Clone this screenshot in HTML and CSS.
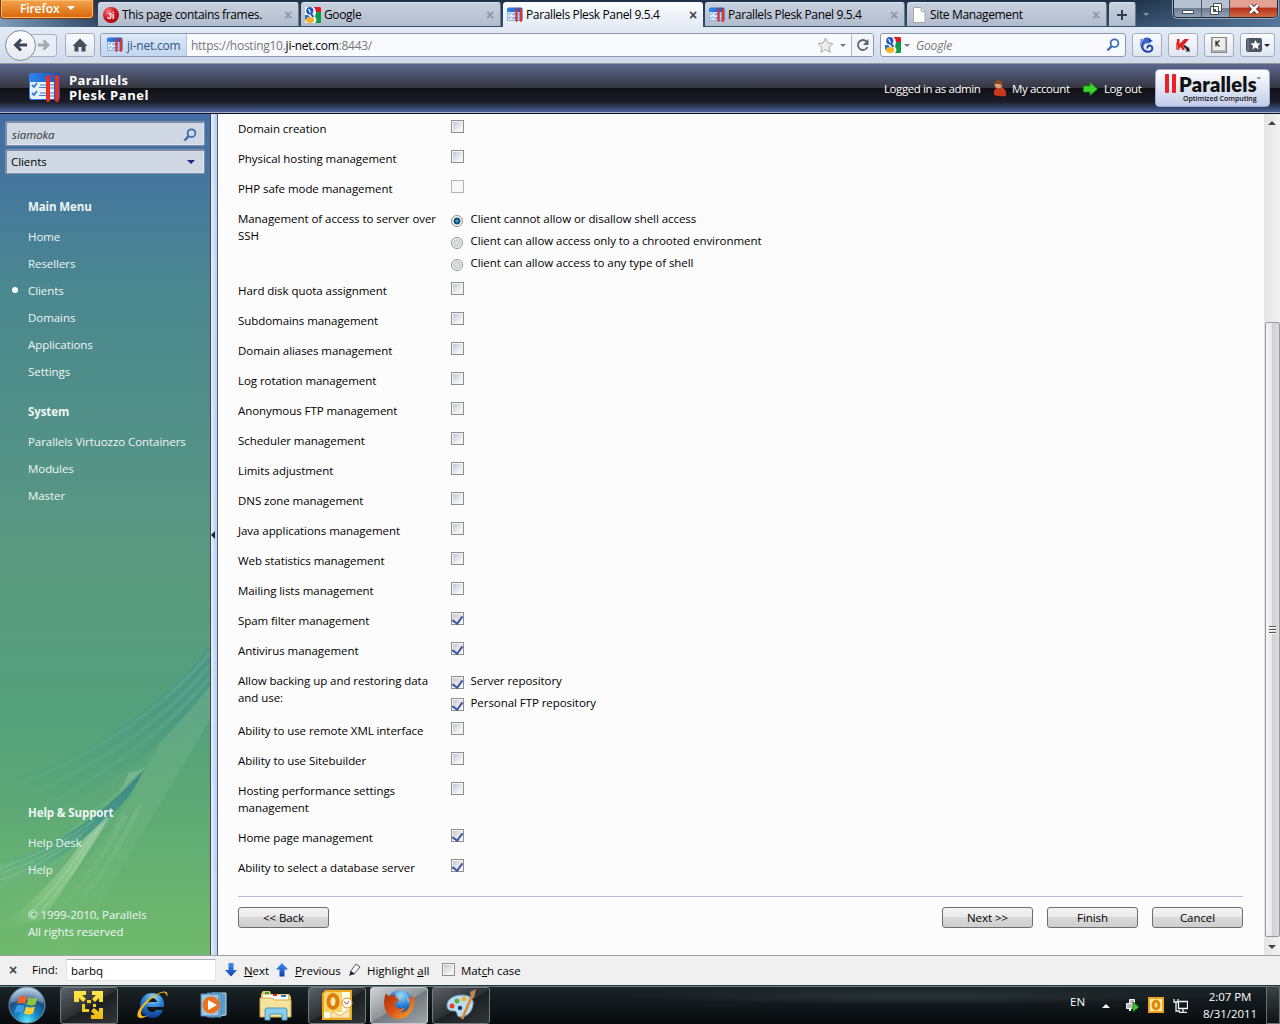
FILE: index.html
```html
<!DOCTYPE html>
<html lang="en">
<head>
<meta charset="utf-8">
<title>Parallels Plesk Panel 9.5.4</title>
<link rel="stylesheet" href="styles.css">
</head>
<body>
<svg class="defs" width="0" height="0">
  <defs>
    <linearGradient id="gBlue" x1="0" y1="0" x2="1" y2="0"><stop offset="0" stop-color="#2f86ee"/><stop offset="1" stop-color="#1554b8"/></linearGradient>
    <linearGradient id="gArrow" x1="0" y1="0" x2="0" y2="1"><stop offset="0" stop-color="#3f8ef0"/><stop offset="1" stop-color="#123fae"/></linearGradient>
    <radialGradient id="gOrb" cx=".5" cy=".95" r=".9"><stop offset="0" stop-color="#5fe9ff"/><stop offset=".35" stop-color="#1587c4"/><stop offset=".7" stop-color="#1d4e80"/><stop offset="1" stop-color="#9fc4dc"/></radialGradient>
    <radialGradient id="gRed" cx=".35" cy=".3" r=".8"><stop offset="0" stop-color="#f88"/><stop offset=".5" stop-color="#d01820"/><stop offset="1" stop-color="#a00810"/></radialGradient>
    <radialGradient id="gGlobe" cx=".55" cy=".2" r=".8"><stop offset="0" stop-color="#9adcf8"/><stop offset=".5" stop-color="#2a7fd0"/><stop offset="1" stop-color="#0c3a90"/></radialGradient>
    <linearGradient id="gFox" x1="0" y1="0" x2="1" y2="1"><stop offset="0" stop-color="#a82c0c"/><stop offset=".5" stop-color="#dc5418"/><stop offset="1" stop-color="#f8b030"/></linearGradient>
    <linearGradient id="gGold" x1="0" y1="0" x2="0" y2="1"><stop offset="0" stop-color="#ffe94a"/><stop offset="1" stop-color="#f0b80c"/></linearGradient>
    <linearGradient id="gBand" x1="1" y1="0" x2="0" y2="1"><stop offset="0" stop-color="#2f8a90" stop-opacity=".3"/><stop offset="1" stop-color="#2f8a90" stop-opacity="0"/></linearGradient>
    <linearGradient id="gPale" x1="1" y1="0" x2="0" y2="1"><stop offset="0" stop-color="#fff" stop-opacity=".08"/><stop offset="1" stop-color="#fff" stop-opacity="0"/></linearGradient>
    <linearGradient id="gLeaf" x1="1" y1="0" x2="0" y2="1"><stop offset="0" stop-color="#2f8088" stop-opacity=".85"/><stop offset=".5" stop-color="#3a9088" stop-opacity=".6"/><stop offset="1" stop-color="#7cc090" stop-opacity=".3"/></linearGradient>
    <linearGradient id="gRay" x1="1" y1="0" x2="0" y2="1"><stop offset="0" stop-color="#d8f0dc" stop-opacity=".4"/><stop offset=".6" stop-color="#c8ecb8" stop-opacity=".25"/><stop offset="1" stop-color="#c8ecb8" stop-opacity="0"/></linearGradient>
  </defs>
  <symbol id="plesk" viewBox="0 0 32 30">
    <rect x="0" y="0" width="31" height="27" rx="3" fill="url(#gBlue)"/>
    <path d="M1 9h16v17H3q-2 0-2-2z" fill="#e8f1fb"/><path d="M21 9h4v17h-4z" fill="#e8f1fb"/>
    <path d="M3 12l2 2 3-4M3 20l2 2 3-4" fill="none" stroke="#2a7be0" stroke-width="1.8"/>
    <path d="M11 12h7M10 14.500h8M11 20h7M10 22.500h8M21 12h4M21 15h4M21 20h4M21 23h4" stroke="#3a7fd8" stroke-width="1.200"/>
    <path d="M19 4v23M28 4v23" stroke="#ee2d24" stroke-width="4" stroke-linecap="round"/>
    <path d="M22 2l3 3V2z" fill="#ee2d24"/>
  </symbol>
  <symbol id="google" viewBox="0 0 16 16">
    <rect width="16" height="16" rx="1" fill="#fff"/>
    <path d="M8.500 0H15q1 0 1 1v4H11q0-3-2.500-5z" fill="#e01a22"/><path d="M11 5h5v10q0 1-1 1h-5q3-3 0-6z" fill="#0c9b48"/>
    <path d="M0 8h3l2 2-5 3z" fill="#2a6fd0"/>
    <ellipse cx="4.800" cy="3.800" rx="3.600" ry="3.800" fill="#2257c5"/><path d="M3.500 2l2 3.500" stroke="#fff" stroke-width="1.300"/>
    <path d="M6 7l2.500 3" stroke="#2257c5" stroke-width="2"/>
    <ellipse cx="5" cy="13" rx="4.200" ry="3" fill="#f7b321"/>
  </symbol>
  <symbol id="mag" viewBox="0 0 14 14">
    <circle cx="8.500" cy="5.200" r="3.900" fill="none" stroke="#3d6fae" stroke-width="1.800"/><path d="M5.600 8.200L1.500 12.500" stroke="#3d6fae" stroke-width="2.400"/>
  </symbol>
</svg>

<div class="tabstrip">
  <div class="fx-button">Firefox <i class="caret-w"></i></div>
  <div class="tabs">
    <div class="tab"><svg width="16" height="16" viewBox="0 0 16 16"><circle cx="8" cy="8" r="8" fill="url(#gRed)"/><text x="4" y="12" class="ji">Ji</text></svg><span class="tab-t t1">This page contains frames.</span><b class="x">×</b></div>
    <div class="tab"><svg width="16" height="16"><use href="#google"/></svg><span class="tab-t">Google</span><b class="x">×</b></div>
    <div class="tab active"><svg width="16" height="16"><use href="#plesk"/></svg><span class="tab-t">Parallels Plesk Panel 9.5.4</span><b class="x">×</b></div>
    <div class="tab"><svg width="16" height="16"><use href="#plesk"/></svg><span class="tab-t">Parallels Plesk Panel 9.5.4</span><b class="x">×</b></div>
    <div class="tab"><svg width="16" height="16" viewBox="0 0 16 16"><path d="M2.500.5h7.500l4 4v11h-11.500z" fill="#fff" stroke="#a8a8a8"/><path d="M10 .5v4h4" fill="#e4e4e4" stroke="#b0b0b0"/></svg><span class="tab-t">Site Management</span><b class="x">×</b></div>
    <div class="tab newtab"><svg width="12" height="12"><path d="M6 1v10M1 6h10" stroke="#333c4a" stroke-width="2"/></svg></div>
  </div>
  <i class="tablist"></i>
  <div class="winctl">
    <span><svg width="14" height="14"><rect x="1.500" y="8.500" width="11" height="3" fill="#fff" stroke="#46505e"/></svg></span>
    <span><svg width="14" height="14"><path d="M4.500 1.500h8v8h-8zM1.500 4.500h8v8h-8z" fill="#fff" stroke="#46505e"/><rect x="4" y="7" width="3" height="3" fill="#46505e"/></svg></span>
    <span class="close"><svg width="14" height="14"><path d="M3 3l8 8M11 3l-8 8" stroke="#5a2020" stroke-width="4.500"/><path d="M3 3l8 8M11 3l-8 8" stroke="#fff" stroke-width="2.600"/></svg></span>
  </div>
</div>

<div class="navbar">
  <div class="backfwd">
    <span class="back"><svg width="18" height="18"><path d="M15 9H4M9 3.500L3.500 9 9 14.500" fill="none" stroke="#3c4656" stroke-width="3"/></svg></span>
    <span class="fwd"><svg width="14" height="14"><path d="M1 7h9M6.500 2.500L11 7l-4.500 4.500" fill="none" stroke="#a3abb6" stroke-width="2.800"/></svg></span>
  </div>
  <span class="btn home"><svg width="16" height="14"><path d="M8 .5L.5 8h2v5.500H6.500V9h3v4.500h4V8h2z" fill="#454f5e"/></svg></span>
  <div class="urlbar">
    <span class="ident"><svg width="16" height="16"><use href="#plesk"/></svg><span>ji-net.com</span></span>
    <span class="url">https://hosting10.<b>ji-net.com</b>:8443/</span>
    <svg class="star" width="17" height="16"><path d="M8.500 1l2.200 5 5.300.5-4 3.500 1.200 5.300-4.700-2.800-4.700 2.800L5 10 1 6.500 6.300 6z" fill="#eee" stroke="#a8a8a8"/></svg>
    <i class="caret"></i>
    <span class="reload"><svg width="14" height="14"><path d="M11.500 9A5 5 0 1 1 10.500 3.500" fill="none" stroke="#5c6470" stroke-width="1.800"/><path d="M12.500 1v6H7z" fill="#5c6470"/></svg></span>
  </div>
  <div class="search">
    <svg width="16" height="16"><use href="#google"/></svg><i class="caret"></i><em>Google</em><svg class="mag" width="14" height="14"><use href="#mag"/></svg>
  </div>
  <span class="btn ext"><svg width="16" height="16" viewBox="0 0 16 16"><path d="M2 2q1 4 4 5M3 11q-2-3-1-6" fill="none" stroke="#5578d8" stroke-width="1.600"/><path d="M11 5q-5-2-7 2-2 5 2 7 5 2 7-1 1-4-2-4.500-3 0-2.500 3" fill="none" stroke="#2745b0" stroke-width="2"/><ellipse cx="8" cy="3.500" rx="4" ry="3" fill="#3c62d0"/><path d="M10 2l4 2-4 1z" fill="#1c3490"/></svg></span>
  <span class="btn ext"><svg width="16" height="16" viewBox="0 0 16 16"><path d="M2 2h2.500v5l5-5H14L8 9l2 4H7.500L5.500 10 4.500 11v2H2z" fill="#e01c1c"/><path d="M1 4v9h3z" fill="#e86060"/><path d="M8 9l2-1 3.500 3V9l1.500 5.500h-5l2-1.200z" fill="#222"/></svg></span>
  <span class="btn ext"><svg width="16" height="16" viewBox="0 0 16 16"><rect x=".5" y=".5" width="15" height="15" fill="#b2b2b2" stroke="#888"/><rect x="2" y="1" width="12" height="12" fill="#efefea"/><path d="M5 3.500v6M8.500 3.500L5.500 6.500l3 3" fill="none" stroke="#222" stroke-width="1.200"/></svg></span>
  <span class="btn ext wide"><svg width="16" height="14" viewBox="0 0 16 14"><rect width="16" height="14" rx="2" fill="#4a5462"/><path d="M2 1v12" stroke="#8590a0"/><path d="M9.500 2l1.500 3.300 3.500.3-2.600 2.300.8 3.500-3.200-1.800-3.200 1.800.8-3.500L4.500 5.600 8 5.300z" fill="#fff"/></svg><i class="caret dark"></i></span>
</div>

<div class="header">
  <svg class="hlogo" width="32" height="30"><use href="#plesk"/></svg>
  <div class="brand"><span>Parallels</span><span>Plesk Panel</span></div>
  <div class="acct">
    <span class="a1">Logged in as admin</span>
    <svg width="14" height="17" viewBox="0 0 14 17"><path d="M1 15q-1-7 4-7l4-1q5 3 4 9-7 1-12-1z" fill="#c8371a"/><circle cx="5.500" cy="4.500" r="3.800" fill="#e0a070"/><path d="M1.500 4Q2 0 6 .3 10 1 9 6L7 4z" fill="#8a4a1c"/></svg>
    <span class="a2">My account</span>
    <svg width="15" height="14" viewBox="0 0 15 14"><path d="M.5 4H7V.5L14.500 7 7 13.500V10H.5z" fill="#3ad42c" stroke="#1e8c18" stroke-width=".8"/></svg>
    <span class="a3">Log out</span>
  </div>
  <div class="plogo"><div class="pl-top"><i></i><i></i><span>Parallels</span><small>™</small></div><div class="pl-sub">Optimized Computing</div></div>
</div>

<div class="main">
  <aside class="side">
    <svg class="swoosh" width="210" height="320" viewBox="0 0 210 320">
      <path d="M210 12Q130 110 0 147V200Q140 150 210 50z" fill="url(#gBand)"/>
      <path d="M210 18Q130 112 0 155M210 30Q130 125 0 170M210 42Q130 138 0 190" fill="none" stroke="url(#gPale)" stroke-width="4"/>
      <path d="M210 52V85Q150 185 70 320H0Q90 240 146 133L160 108z" fill="url(#gPale)"/>
      <path d="M145 132l-7 4-9 1q-4 12-12 20L0 250V320Q80 240 145 132z" fill="url(#gPale)"/>
      <path d="M145 132l-7 4-9 1q-3 12-11 21z" fill="#fff" opacity=".12"/>
      <path d="M143 136Q125 155 105 172 60 210 0 229V252Q50 235 85 202 125 175 143 136z" fill="url(#gLeaf)"/>
      <path d="M0 233Q55 215 95 185M0 239Q50 222 88 194M0 245Q45 230 82 200" fill="none" stroke="#b6e4c0" opacity=".3"/>
      <path d="M108 180L85 203Q50 255 0 292L42 285Q75 240 108 184z" fill="url(#gRay)"/>
      <path d="M100 190Q75 240 38 280M92 200Q65 245 28 280" fill="none" stroke="#d8f4d0" stroke-width="1.500" opacity=".2"/>
      <path d="M140 170Q110 235 60 290M125 180Q95 240 45 290" fill="none" stroke="url(#gPale)" stroke-width="5"/>
    </svg>
    <div class="field f1"><em>siamoka</em><svg width="14" height="14"><use href="#mag"/></svg></div>
    <div class="field f2"><span>Clients</span><i></i></div>
    <nav class="menu">
      <h4>Main Menu</h4><a>Home</a><a>Resellers</a><a class="cur">Clients</a><a>Domains</a><a>Applications</a><a>Settings</a>
      <h4 class="sys">System</h4><a class="pvc">Parallels Virtuozzo Containers</a><a>Modules</a><a>Master</a>
    </nav>
    <nav class="menu foot">
      <h4>Help &amp; Support</h4><a>Help Desk</a><a>Help</a>
      <p>© 1999-2010, Parallels<br>All rights reserved</p>
    </nav>
  </aside>
  <div class="split"><i></i></div>
  <section class="form">
    <div class="row"><label>Domain creation</label><i class="cb"></i></div>
    <div class="row"><label>Physical hosting management</label><i class="cb"></i></div>
    <div class="row"><label>PHP safe mode management</label><i class="cb off"></i></div>
    <div class="row"><label>Management of access to server over<br>SSH</label>
      <div class="opts"><span><i class="rb on"></i>Client cannot allow or disallow shell access</span><span><i class="rb"></i>Client can allow access only to a chrooted environment</span><span><i class="rb"></i>Client can allow access to any type of shell</span></div></div>
    <div class="row"><label>Hard disk quota assignment</label><i class="cb"></i></div>
    <div class="row"><label>Subdomains management</label><i class="cb"></i></div>
    <div class="row"><label>Domain aliases management</label><i class="cb"></i></div>
    <div class="row"><label>Log rotation management</label><i class="cb"></i></div>
    <div class="row"><label>Anonymous FTP management</label><i class="cb"></i></div>
    <div class="row"><label>Scheduler management</label><i class="cb"></i></div>
    <div class="row"><label>Limits adjustment</label><i class="cb"></i></div>
    <div class="row"><label>DNS zone management</label><i class="cb"></i></div>
    <div class="row"><label>Java applications management</label><i class="cb"></i></div>
    <div class="row"><label>Web statistics management</label><i class="cb"></i></div>
    <div class="row"><label>Mailing lists management</label><i class="cb"></i></div>
    <div class="row"><label>Spam filter management</label><i class="cb on"></i></div>
    <div class="row"><label>Antivirus management</label><i class="cb on"></i></div>
    <div class="row"><label>Allow backing up and restoring data<br>and use:</label>
      <div class="opts"><span><i class="cb on"></i>Server repository</span><span><i class="cb on"></i>Personal FTP repository</span></div></div>
    <div class="row"><label>Ability to use remote XML interface</label><i class="cb"></i></div>
    <div class="row"><label>Ability to use Sitebuilder</label><i class="cb"></i></div>
    <div class="row"><label>Hosting performance settings<br>management</label><i class="cb"></i></div>
    <div class="row"><label>Home page management</label><i class="cb on"></i></div>
    <div class="row"><label>Ability to select a database server</label><i class="cb on"></i></div>
    <div class="actions"><button>&lt;&lt; Back</button><button class="next">Next &gt;&gt;</button><button>Finish</button><button>Cancel</button></div>
  </section>
  <div class="scroll"><i class="up"></i><div class="thumb"><b></b></div><i class="down"></i></div>
</div>

<div class="findbar">
  <b class="fx">×</b><span class="flabel">Find:</span><span class="finput">barbq</span>
  <svg width="12" height="14"><path d="M3.500 0h5v7H12l-6 6.500L0 7h3.500z" fill="url(#gArrow)"/></svg><span class="fnext"><u>N</u>ext</span>
  <svg width="12" height="14"><path d="M3.500 13.500h5v-7H12L6 0 0 6.500h3.500z" fill="url(#gArrow)"/></svg><span class="fprev"><u>P</u>revious</span>
  <svg width="13" height="14" viewBox="0 0 13 14"><path d="M8 1l4 3-6 7-4-2z" fill="#f6f6f6" stroke="#555"/><path d="M3 8l4 3-4 1-2 1z" fill="#222"/></svg><span class="fhigh">Highlight <u>a</u>ll</span>
  <i class="cb"></i><span class="fmatch">Mat<u>c</u>h case</span>
</div>

<div class="taskbar">
  <svg class="orb" width="38" height="38" viewBox="0 0 38 38"><circle cx="19" cy="19" r="18" fill="url(#gOrb)" stroke="#6a8ea8"/><path d="M3 17a16 15 0 0 1 32 0q-15-6-32 0z" fill="#fff" opacity=".25"/>
    <path d="M11 11q4-2 8 0l-2 7q-4-2-8 0z" fill="#f0602a"/><path d="M20.500 11.500q4 2 9 0l-2 7q-4 2-9 0z" fill="#8cc63c"/><path d="M8.500 20q4-2 8 0l-2 7q-4-2-8 0z" fill="#3c9ce8"/><path d="M18 20.500q4 2 9 0l-2 7q-4 2-9 0z" fill="#fccb30"/></svg>
  <div class="task box"><svg width="32" height="32" viewBox="0 0 32 32"><path d="M1 2h12v4H9l4 4-3 3-4-4v4H1zM30 2v11h-4V9l-4 4-3-3 4-4h-4V2zM30 30H18v-4h4l-4-4 3-3 5 4v-4h4z" fill="url(#gGold)"/><path d="M9 15h3v5h4v3H9zM14 11h4v3h-4zM20 15h3v3h-3z" fill="#f6cc1c"/></svg></div>
  <div class="task"><svg width="34" height="32" viewBox="0 0 34 32"><path d="M17 4C9 4 5 10 5 17s5 12 12 12c6 0 9-3 11-8h-7q-2 3-5 2-4-1-4-5h17C30 9 25 4 17 4zm-5 9q1-4 5-4t5 4z" fill="url(#gGlobe)"/><path d="M32 8C34 2 30 0 20 6 8 12 0 24 3 28q3 3 11-2-7 3-8-1C5 20 14 11 22 6q9-6 10 2z" fill="#f4b41c"/></svg></div>
  <div class="task"><svg width="28" height="28" viewBox="0 0 28 28"><path d="M12 2h14v22l-14 2z" fill="#5e9cc8" stroke="#b4dcf4"/><path d="M7 2h14v24H7z" fill="#8cc0e0" stroke="#4880a8"/><path d="M1 3h18v22H1z" fill="#9ac8e4" stroke="#4880a8"/><circle cx="11" cy="14" r="8.500" fill="#f0701a"/><path d="M8 9l9 5-9 5z" fill="#fff"/></svg></div>
  <div class="task"><svg width="34" height="32" viewBox="0 0 34 32"><path d="M2 5l2-3h7l1 3h18l2 3v20H2z" fill="#e4c468"/><path d="M4 6h25v6H4z" fill="#fff"/><path d="M6 3h4v2H6z" fill="#28a838"/><path d="M14 5h4v2h-4z" fill="#d83020"/><path d="M22 6h5v2h-5z" fill="#2878d0"/><path d="M1 9h12l2 2h17v17H1z" fill="#f6e49c" stroke="#d0a840"/><path d="M6 31V21q0-2 2-2h18q2 0 2 2v10h-5v-6H11v6z" fill="#8accec" stroke="#4c98c4"/></svg></div>
  <div class="task box"><svg width="32" height="32" viewBox="0 0 32 32"><path d="M5 2h25v28H2V5z" fill="#fffbe8" stroke="#f0a818" stroke-width="2"/><path d="M10 22l9 5 10-7v9H10z" fill="#fbeab8" stroke="#e0b050"/><path d="M6 3h15v20H3V6z" fill="#fbd468"/><ellipse cx="12" cy="12.500" rx="4.500" ry="6.500" fill="#ffe9a8" stroke="#dc7c0c" stroke-width="4"/><circle cx="26" cy="14" r="5" fill="#fff" stroke="#d89028"/><path d="M23 13l3 2 2-3" fill="none" stroke="#d03820"/></svg></div>
  <div class="task box sel"><svg width="34" height="32" viewBox="0 0 34 32"><circle cx="18" cy="14" r="13" fill="url(#gGlobe)"/><path d="M15 4q5 0 5 4t-5 3zM24 6l5 5-3 4z" fill="#8cd0f0" opacity=".6"/><path d="M4 4q1 3 4 3l5-2q-1 3 2 4l2 2q-1 2-4 3 0 5 5 6l5-1q-1 3-5 4 7 1 9-5 2-5-1-10 5 3 4-3 4 6 1 14c-3 8-11 13-19 10C2 26 0 14 4 4z" fill="url(#gFox)"/></svg></div>
  <div class="task box last"><svg width="34" height="32" viewBox="0 0 34 32"><path d="M3 18C2 10 10 6 18 6c9 0 12 5 11 10-1 7-6 12-13 12-4 0-2-5-5-6-3 0-7 0-8-4z" fill="#b8dcf0" stroke="#6898b8"/><circle cx="8" cy="17" r="2.500" fill="#e04030"/><circle cx="13" cy="12" r="2.500" fill="#58b040"/><circle cx="20" cy="10" r="2.500" fill="#f0b030"/><circle cx="16" cy="19" r="2.200" fill="#1c3c60"/><path d="M18 30L28 7" stroke="#e08828" stroke-width="2.600"/><path d="M27 9l-1-6 6-3-2 9z" fill="#b88858"/></svg></div>
  <div class="tray">
    <span class="en">EN</span><i class="tri"></i>
    <svg class="t-a" width="15" height="15"><path d="M4.500 1.500h5v4h-5zM1.500 5.500h6v5h-6z" fill="#bbb" stroke="#f4f4f4"/><path d="M5 10v3" stroke="#fff" stroke-width="2"/><path d="M8 4l6 5-6 5z" fill="#3cc83c" stroke="#0a700a"/></svg>
    <svg class="t-b" width="16" height="16"><rect width="16" height="16" fill="#f4a020"/><path d="M2 2h12v12H2z" fill="#fff0b0"/><ellipse cx="8" cy="8" rx="3" ry="4" fill="#ffe498" stroke="#e08808" stroke-width="3"/></svg>
    <svg class="t-c" width="15" height="15"><path d="M5.500 3.500h9v7h-9zM10 11v3M6 14.500h8M1 1v3h4V1M3 4v9h4" fill="none" stroke="#f4f4f4" stroke-width="1.300"/></svg>
    <div class="clock">2:07 PM<br>8/31/2011</div>
  </div>
  <div class="peek"></div>
</div>
</body>
</html>
```
FILE: styles.css
```css
* { box-sizing: border-box; }
body { margin: 0; width: 1280px; height: 1024px; overflow: hidden; display: flex; flex-direction: column; font: 11.5px/17px "Open Sans", "Noto Sans", sans-serif; letter-spacing: -.06px; color: #000; background: #fcfcfc; white-space: nowrap; }
svg { display: block; flex: none; }
.defs { position: absolute; }
i { flex: none; }

.tabstrip { height: 27px; flex: none; display: flex; align-items: flex-start; background: linear-gradient(90deg, rgba(160,190,215,.7) 0, rgba(30,50,75,.1) 100px, rgba(0,0,0,0) 1130px, rgba(120,160,200,.5) 1280px), linear-gradient(#1e3148, #35506c); }
.fx-button { width: 94px; height: 19px; flex: none; margin-right: 4px; padding-left: 19px; display: flex; align-items: center; gap: 8px; color: #fff; font-weight: 600; font-size: 12px; line-height: 15px; padding-bottom: 2px; letter-spacing: -.1px; background: linear-gradient(#f3a64b, #d9640b); border: 1px solid #7c3a08; border-top: 0; border-radius: 0 0 4px 4px; box-shadow: inset 0 0 0 1px #f8bd73; }
.caret-w { border: 4px solid transparent; border-top-color: #fff; border-bottom: 0; }
.tabs { display: flex; gap: 2px; padding-top: 2px; }
.tab { width: 200px; height: 24px; display: flex; align-items: center; padding: 0 6px 0 4px; border-radius: 3px 3px 0 0; background: linear-gradient(#c8d1de, #b1bccd); border-top: 1px solid #dde4ed; border-right: 1px solid #6c7c90; font-size: 12px; }
.tab:first-child { width: 201px; padding-left: 5px; }
.tab.active { height: 25px; background: linear-gradient(#fbfcfe, #e4ebf5); border: 0; }
.tab-t { margin-left: 3px; flex: 1; letter-spacing: -.36px; }
.tab .t1 { letter-spacing: -.35px; }
.x { font: 700 14px/14px "Liberation Sans", sans-serif; color: #8a94a2; }
.active .x { color: #3c4450; }
.ji { font: 700 9px "Liberation Sans", sans-serif; fill: #fff; }
.newtab { width: 27px; padding: 0; justify-content: center; }
.tablist { margin: 13px 0 0 7px; border: 3px solid transparent; border-top-color: #8292a6; border-bottom: 0; }
.winctl { margin-left: auto; margin-right: 2px; height: 18px; display: flex; border: 1px solid #1c2938; border-top: 0; border-radius: 0 0 5px 5px; overflow: hidden; box-shadow: 0 0 0 1px #9aaabb; }
.winctl span { width: 28px; display: grid; place-items: center; background: linear-gradient(#b6c2cf 45%, #6f8092 50%, #93a3b4); border-right: 1px solid #48586a; }
.winctl .close { width: 47px; border: 0; background: linear-gradient(#e1a294 40%, #b9331d 50%, #cf6a40); }

.navbar { height: 37px; flex: none; display: flex; align-items: center; padding: 0 5px; background: linear-gradient(#e4ebf5, #cfd9ea); border-bottom: 1px solid #969696; }
.backfwd { display: flex; align-items: center; width: 60px; }
.back { width: 31px; height: 31px; border-radius: 50%; border: 1px solid #838b98; display: grid; place-items: center; background: linear-gradient(#fff, #e4e8ef); z-index: 1; }
.fwd { width: 26px; height: 23px; margin-left: -5px; border: 1px solid #aab3c2; border-radius: 0 3px 3px 0; display: grid; place-items: center; background: #e9eef6; }
.btn { height: 24px; display: flex; align-items: center; justify-content: center; border: 1px solid #a4adbc; border-radius: 3px; background: linear-gradient(#fafbfd, #dfe6f0); }
.home { width: 30px; margin-right: 5px; }
.urlbar { width: 774px; height: 24px; display: flex; align-items: center; border: 1px solid #8e98a8; border-radius: 3px; background: #f8fafd; font-size: 12px; overflow: hidden; }
.ident { width: 86px; height: 22px; display: flex; align-items: center; gap: 4px; padding-left: 6px; background: linear-gradient(#dce9f8, #c3d6f0); border-right: 1px solid #b3c8e6; color: #2e5484; letter-spacing: -.2px; }
.url { flex: 1; padding-left: 4px; color: #777; letter-spacing: -.26px; }
.url b { font-weight: 400; color: #000; }
.star { margin-right: 6px; }
.caret { border: 3px solid transparent; border-top-color: #777; border-bottom: 0; }
.caret.dark { border-top-color: #222; margin-left: 2px; }
.reload { width: 22px; height: 22px; margin-left: 5px; border-left: 1px solid #b0b7c2; display: grid; place-items: center; background: #f2f5fa; }
.search { width: 246px; height: 24px; margin-left: 6px; margin-right: 6px; display: flex; align-items: center; padding: 0 5px 0 4px; border: 1px solid #8e98a8; border-radius: 3px; background: #f8fafd; color: #777; font-size: 12px; }
.search .caret { margin: 0 6px 0 3px; }
.search em { flex: 1; letter-spacing: -.15px; }
.ext { width: 30px; margin-right: 6px; }
.ext.wide { width: 35px; margin-right: 0; }

.header { height: 50px; flex: none; display: flex; padding: 0 10px 0 29px; color: #fff; background: linear-gradient(#5c678c, #35363f 24px, #101015 24px, #1b1d29 38px, #455a8f 47px); border-bottom: 1px solid #0d1020; box-shadow: inset 0 -1px #a8b6d4; position: relative; z-index: 1; }
.hlogo { margin-top: 9px; }
.brand { margin: 9px 0 0 8px; display: flex; flex-direction: column; font: 700 13px/15px "Open Sans", sans-serif; letter-spacing: .55px; }
.brand span:first-child { letter-spacing: .4px; }
.acct { margin-left: auto; display: flex; align-items: center; letter-spacing: -.4px; }
.acct svg:nth-child(2) { margin-left: 14px; }
.a1, .a2, .a3 { flex: none; }
.a1 { width: 95px; }
.a2 { width: 57px; margin: 0 14px 0 5px; }
.a3 { width: 38px; margin: 0 13px 0 6px; }
.plogo { width: 115px; height: 38px; margin-top: 5px; border-radius: 4px; background: linear-gradient(#fff, #c2cde9); border: 1px solid #9eaad0; color: #111; }
.pl-top { display: flex; padding: 4px 0 0 9px; height: 24px; }
.pl-top i { width: 4px; height: 19px; margin-right: 3px; border-radius: 1px; background: #e8202a; }
.pl-top span { font: 800 20px/20px Lato, sans-serif; letter-spacing: .2px; }
.pl-top small { font: 5px/10px "Open Sans", sans-serif; }
.pl-sub { padding: 0 0 0 27px; font: 600 7px/9px "Open Sans", sans-serif; letter-spacing: -.02px; }

.main { height: 841px; flex: none; display: flex; }
.side { width: 210px; display: flex; flex-direction: column; padding: 7px 5px 0; background: linear-gradient(#426da6, #4a8790 170px, #5a9a80 450px, #54a07c 600px, #6fb96c 835px); position: relative; color: #eef6f4; }
.swoosh { position: absolute; left: 0; bottom: 0; }
.field { height: 25px; flex: none; display: flex; align-items: center; justify-content: space-between; padding: 2px 7px 0 6px; background: #cfd8e3; border: 1px solid #8490a8; border-radius: 2px; box-shadow: inset 1px 1px #7f8aa0, inset -1px -1px #dde4ee; }
.f1 { color: #333; }
.f2 { margin-top: 3px; padding: 0 9px 0 5px; color: #000; }
.f2 i { border: 4px solid transparent; border-top-color: #20267a; border-bottom: 0; }
.menu { padding: 21px 0 0 23px; display: flex; flex-direction: column; position: relative; }
.menu h4 { margin: 0; height: 30px; font: 700 11.500px/23px "Open Sans", sans-serif; letter-spacing: -.1px; }
.menu a { height: 27px; line-height: 23px; }
.menu .sys { margin-top: 13px; }
.cur::before { content: ""; position: absolute; left: 7px; margin-top: 8px; width: 6px; height: 6px; border-radius: 50%; background: #fff; }
.foot { margin-top: auto; padding: 0 0 15px 23px; }
.foot p { margin: 21px 0 0; }
.split { width: 8px; flex: none; display: flex; align-items: center; background: linear-gradient(90deg, #e8f0fc, #b3cdf5); border-left: 1px solid #41465a; border-right: 1px solid #5a6070; }
.split i { border: 4px solid transparent; border-right-color: #222; border-left: 0; }

.form { width: 1046px; padding: 0 21px 0 20px; background: #fcfcfc; }
.row { display: grid; grid-template-columns: 213px 1fr; align-items: start; }
.row label { padding: 6px 0 7px; }
.cb { width: 13px; height: 13px; border: 1px solid #8e8f8f; background: linear-gradient(135deg, #c4c9d0, #f4f4f4 80%) content-box, #f4f4f4; padding: 1px; display: grid; place-items: center; }
.row > .cb { margin-top: 6px; }
.cb.off { border-color: #b4b4b4; background: #f7f7f7; }
.cb.on::after { content: ""; width: 5px; height: 8px; margin-bottom: 2px; border: solid #3f55a0; border-width: 0 2px 2px 0; transform: rotate(36deg); }
.opts { padding: 3px 0 3px; display: flex; flex-direction: column; }
.opts span { height: 22px; display: flex; align-items: center; gap: 6.500px; }
.opts .cb { margin-top: 5px; }
.rb { width: 12px; height: 12px; margin-top: 6px; margin-right: 1px; border: 1px solid #8e8f8f; border-radius: 50%; background: radial-gradient(circle, #e6e8ea 0, #c9cccf 3.500px, #f4f4f4 4px); }
.rb.on { background: radial-gradient(circle at 50% 50%, #4cc0e8 0, #0c4a78 2.500px, #123a5c 3px, #f0f0f0 3.800px); }
.actions { margin-top: 13px; padding-top: 10px; border-top: 1px solid #b4c0d6; display: flex; gap: 14px; }
.actions button { width: 91px; height: 21px; padding: 1px 0 0; font: inherit; letter-spacing: inherit; line-height: 18px; border: 1px solid #707070; border-radius: 3px; background: linear-gradient(#f2f2f2, #ebebeb 45%, #d9d9d9 50%, #cfcfcf); color: #000; }
.actions .next { margin-left: auto; }
.scroll { width: 16px; flex: none; display: flex; flex-direction: column; align-items: center; background: linear-gradient(90deg, #e4e4e4, #f2f2f2); }
.up { margin: 7px 0 197px; border: 4px solid transparent; border-bottom-color: #444; border-top: 0; }
.down { margin-top: 8px; border: 4px solid transparent; border-top-color: #444; border-bottom: 0; }
.thumb { width: 15px; height: 615px; display: grid; place-items: center; border: 1px solid #979797; border-radius: 2px; background: linear-gradient(90deg, #f6f6f6, #e8e8ea 45%, #cfd0d4 50%, #dcdce0); }
.thumb b { width: 7px; height: 8px; background: repeating-linear-gradient(#555 0 1px, #fff 1px 2px, transparent 2px 3px); }

.findbar { height: 30px; flex: none; display: flex; align-items: center; padding-bottom: 2px; background: #f0f0f0; border-top: 1px solid #a0a0a0; }
.fx { margin-left: 9px; width: 9px; font: 700 14px/14px "Liberation Sans", sans-serif; color: #444; }
.flabel { margin-left: 14px; width: 34px; }
.finput { width: 150px; height: 22px; padding: 2px 5px 2px 4px; margin-right: 9px; background: #fff; border: 1px solid #e2e3ea; border-top-color: #abadb3; }
.fnext, .fprev, .fhigh, .fmatch { padding-top: 1px; }
.fnext { margin-left: 7px; width: 32px; }
.fprev { margin-left: 7px; width: 53px; }
.fhigh { margin-left: 6px; width: 75px; }
.fmatch { margin-left: 6px; }

.taskbar { height: 39px; flex: none; display: flex; align-items: center; background: radial-gradient(ellipse at 920px 10px, #2a3336 0, rgba(30,38,40,0) 300px) , linear-gradient(#1b2428, #080b0e); border-top: 1px solid #1f3a3c; box-shadow: inset 0 1px #6c7a7c; }
.orb { margin: 0 14px 0 8px; }
.task { width: 62px; height: 37px; display: grid; place-items: center; }
.task:not(.box) svg { margin-right: 3px; }
.task.box { width: 58px; margin-right: 4px; border: 1px solid #74797c; border-radius: 3px; background: linear-gradient(150deg, #5c6266, #2b3033 50%, #1c2022 52%, #303538); }
.task.sel { background: linear-gradient(150deg, #d0d4d8, #8e9499 50%, #73797e 52%, #a0a5aa); border-color: #c4c8cc; }
.tray { margin-left: auto; display: flex; color: #fff; align-items: center; }
.en { margin: -7px 17px 0 0; }
.tri { border: 4px solid transparent; border-bottom-color: #fff; border-top: 0; margin-top: 2px; }
.t-a { margin: 1px 8px 0 15px; }
.t-b { margin: 0 9px 0 0; }
.t-c { margin-top: 1px; }
.clock { width: 70px; margin-left: 7px; text-align: center; }
.peek { width: 14px; height: 38px; margin-left: 1px; margin-right: 0; border: 1px solid #6a7072; background: linear-gradient(#3c4244, #101314); }
```
